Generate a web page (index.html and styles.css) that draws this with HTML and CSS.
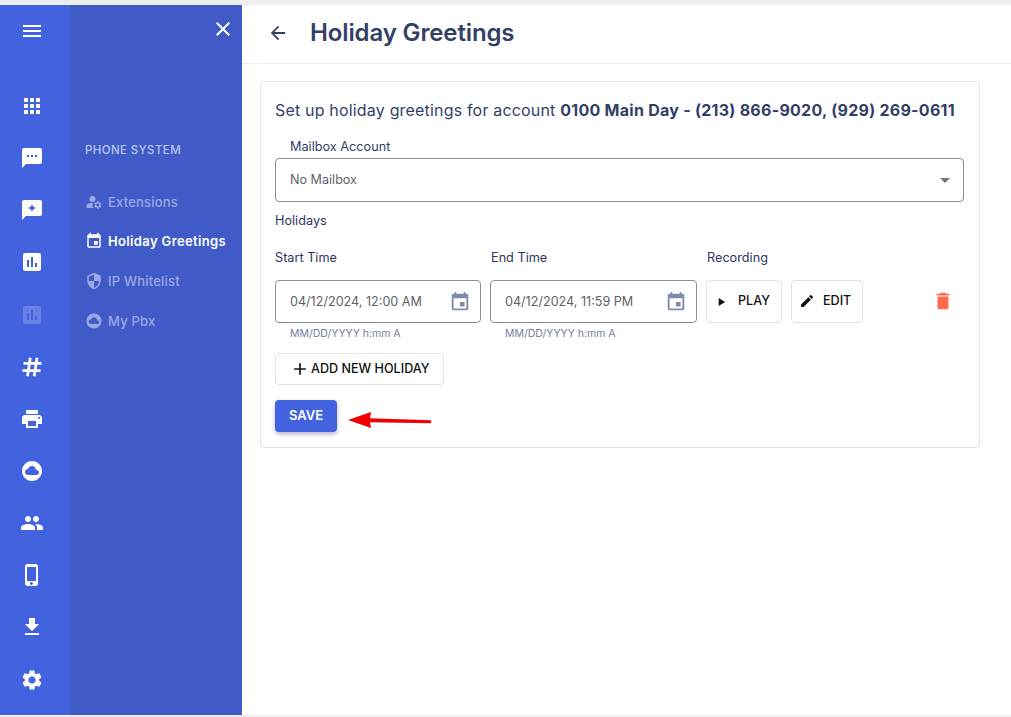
FILE: index.html
```html
<!DOCTYPE html>
<html lang="en">
<head>
<meta charset="utf-8">
<title>Holiday Greetings</title>
<link rel="stylesheet" href="styles.css">
</head>
<body>
<div class="app">
  <nav class="rail">
    <svg class="ic menu-ic" viewBox="0 0 24 24"><path d="M3 18h18v-2H3v2zm0-5h18v-2H3v2zm0-7v2h18V6H3z"/></svg>
    <div class="rail-list">
      <svg class="ic" viewBox="0 0 24 24"><path d="M4 8h4V4H4v4zm6 12h4v-4h-4v4zm-6 0h4v-4H4v4zm0-6h4v-4H4v4zm6 0h4v-4h-4v4zm6-10v4h4V4h-4zm-6 4h4V4h-4v4zm6 6h4v-4h-4v4zm0 6h4v-4h-4v4z"/></svg>
      <svg class="ic" viewBox="0 0 24 24"><path d="M20 2H4c-1.1 0-1.99.9-1.99 2L2 22l4-4h14c1.1 0 2-.9 2-2V4c0-1.1-.9-2-2-2zM9 11H7V9h2v2zm4 0h-2V9h2v2zm4 0h-2V9h2v2z"/></svg>
      <svg class="ic" viewBox="0 0 24 24"><path fill-rule="evenodd" d="M20 2H4c-1.1 0-2 .9-2 2v18l4-4h14c1.1 0 2-.9 2-2V4c0-1.1-.9-2-2-2zM12 6l1.2 2.8L16 10l-2.8 1.2L12 14l-1.2-2.8L8 10l2.8-1.2z"/></svg>
      <svg class="ic" viewBox="0 0 24 24"><path d="M19 3H5c-1.1 0-2 .9-2 2v14c0 1.1.9 2 2 2h14c1.1 0 2-.9 2-2V5c0-1.1-.9-2-2-2zM9 17H7v-7h2v7zm4 0h-2V7h2v10zm4 0h-2v-4h2v4z"/></svg>
      <svg class="ic dim" viewBox="0 0 24 24"><path d="M19 3H5c-1.1 0-2 .9-2 2v14c0 1.1.9 2 2 2h14c1.1 0 2-.9 2-2V5c0-1.1-.9-2-2-2zM9 17H7v-7h2v7zm4 0h-2V7h2v10zm4 0h-2v-4h2v4z"/></svg>
      <svg class="ic" viewBox="0 0 24 24"><path class="hash" d="M10.3 2.8 7.5 21.2M17 2.8l-2.8 18.4M3.5 8.4h18M2.5 15.6h18"/></svg>
      <svg class="ic" viewBox="0 0 24 24"><path d="M19 8H5c-1.66 0-3 1.34-3 3v6h4v4h12v-4h4v-6c0-1.66-1.34-3-3-3zm-3 11H8v-5h8v5zm3-7c-.55 0-1-.45-1-1s.45-1 1-1 1 .45 1 1-.45 1-1 1zm-1-9H6v4h12V3z"/></svg>
      <svg class="ic" viewBox="0 0 24 24"><path d="M12 2C6.48 2 2 6.48 2 12s4.48 10 10 10 10-4.48 10-10S17.52 2 12 2zm4.5 14H8c-1.66 0-3-1.34-3-3s1.34-3 3-3l.14.01C8.58 8.28 10.13 7 12 7c2.21 0 4 1.79 4 4h.5c1.38 0 2.5 1.12 2.5 2.5S17.88 16 16.5 16z"/></svg>
      <svg class="ic" viewBox="0 0 24 24"><path d="M16 11c1.66 0 2.99-1.34 2.99-3S17.66 5 16 5c-1.66 0-3 1.34-3 3s1.34 3 3 3zm-8 0c1.66 0 2.99-1.34 2.99-3S9.66 5 8 5C6.34 5 5 6.34 5 8s1.34 3 3 3zm0 2c-2.33 0-7 1.17-7 3.5V19h14v-2.5c0-2.33-4.67-3.5-7-3.5zm8 0c-.29 0-.62.02-.97.05 1.16.84 1.97 1.97 1.97 3.45V19h6v-2.5c0-2.33-4.67-3.5-7-3.5z"/></svg>
      <svg class="ic" viewBox="0 0 24 24"><path d="M15.5 1h-8C6.12 1 5 2.12 5 3.5v17C5 21.88 6.12 23 7.5 23h8c1.38 0 2.5-1.12 2.5-2.5v-17C18 2.12 16.88 1 15.5 1zm-4 21c-.83 0-1.5-.67-1.5-1.5s.67-1.5 1.5-1.5 1.5.67 1.5 1.5-.67 1.5-1.5 1.5zm4.5-4H7V4h9v14z"/></svg>
      <svg class="ic" viewBox="0 0 24 24"><path d="M19 9h-4V3H9v6H5l7 7 7-7zM5 18v2h14v-2H5z"/></svg>
      <svg class="ic" viewBox="0 0 24 24"><path d="M19.14 12.94c.04-.3.06-.61.06-.94 0-.32-.02-.64-.07-.94l2.03-1.58c.18-.14.23-.41.12-.61l-1.92-3.32c-.12-.22-.37-.29-.59-.22l-2.39.96c-.5-.38-1.03-.7-1.62-.94l-.36-2.54c-.04-.24-.24-.41-.48-.41h-3.84c-.24 0-.43.17-.47.41l-.36 2.54c-.59.24-1.13.57-1.62.94l-2.39-.96c-.22-.08-.47 0-.59.22L2.74 8.87c-.12.21-.08.47.12.61l2.03 1.58c-.05.3-.09.63-.09.94s.02.64.07.94l-2.03 1.58c-.18.14-.23.41-.12.61l1.92 3.32c.12.22.37.29.59.22l2.39-.96c.5.38 1.03.7 1.62.94l.36 2.54c.05.24.24.41.48.41h3.84c.24 0 .44-.17.47-.41l.36-2.54c.59-.24 1.13-.56 1.62-.94l2.39.96c.22.08.47 0 .59-.22l1.92-3.32c.12-.22.07-.47-.12-.61l-2.01-1.58zM12 15.6c-1.98 0-3.6-1.62-3.6-3.6s1.62-3.6 3.6-3.6 3.6 1.62 3.6 3.6-1.62 3.6-3.6 3.6z"/></svg>
    </div>
  </nav>

  <aside class="panel">
    <div class="panel-close">
      <svg class="ic" viewBox="0 0 24 24"><path d="M19 6.41L17.59 5 12 10.59 6.41 5 5 6.41 10.59 12 5 17.59 6.41 19 12 13.41 17.59 19 19 17.59 13.41 12z"/></svg>
    </div>
    <div class="panel-title">PHONE SYSTEM</div>
    <ul class="panel-list">
      <li class="panel-item">
        <svg class="sub-ic" viewBox="0 0 24 24"><circle cx="10" cy="8" r="4"/><path d="M10.67 13.02c-.22-.01-.44-.02-.67-.02-2.42 0-4.68.67-6.61 1.82-.88.52-1.39 1.5-1.39 2.53V20h9.26c-.79-1.13-1.26-2.51-1.26-4 0-1.07.25-2.07.67-2.98zM20.75 16c0-.22-.03-.42-.06-.63l1.14-1.01-1-1.73-1.45.49c-.32-.27-.68-.48-1.08-.63L18 11h-2l-.3 1.49c-.4.15-.76.36-1.08.63l-1.45-.49-1 1.73 1.14 1.01c-.03.21-.06.41-.06.63s.03.42.06.63l-1.14 1.01 1 1.73 1.45-.49c.32.27.68.48 1.08.63L16 21h2l.3-1.49c.4-.15.76-.36 1.08-.63l1.45.49 1-1.73-1.14-1.01c.03-.21.06-.41.06-.63zM17 18c-1.1 0-2-.9-2-2s.9-2 2-2 2 .9 2 2-.9 2-2 2z"/></svg>
        <span>Extensions</span>
      </li>
      <li class="panel-item active">
        <svg class="sub-ic" viewBox="0 0 24 24"><path d="M17 12h-5v5h5v-5zM16 1v2H8V1H6v2H5c-1.11 0-1.99.9-1.99 2L3 19c0 1.1.89 2 2 2h14c1.1 0 2-.9 2-2V5c0-1.1-.9-2-2-2h-1V1h-2zm3 18H5V8h14v11z"/></svg>
        <span>Holiday Greetings</span>
      </li>
      <li class="panel-item">
        <svg class="sub-ic" viewBox="0 0 24 24"><path d="M12 1L3 5v6c0 5.55 3.84 10.74 9 12 5.16-1.26 9-6.45 9-12V5l-9-4zm0 10.99h7c-.53 4.12-3.28 7.79-7 8.94V12H5V6.3l7-3.11v8.8z"/></svg>
        <span>IP Whitelist</span>
      </li>
      <li class="panel-item">
        <svg class="sub-ic" viewBox="0 0 24 24"><path d="M12 2C6.48 2 2 6.48 2 12s4.48 10 10 10 10-4.48 10-10S17.52 2 12 2zm4.5 14H8c-1.66 0-3-1.34-3-3s1.34-3 3-3l.14.01C8.58 8.28 10.13 7 12 7c2.21 0 4 1.79 4 4h.5c1.38 0 2.5 1.12 2.5 2.5S17.88 16 16.5 16z"/></svg>
        <span>My Pbx</span>
      </li>
    </ul>
  </aside>

  <main class="main">
    <header class="topbar">
      <svg class="back-ic" viewBox="0 0 24 24"><path d="M20 11H7.83l5.59-5.59L12 4l-8 8 8 8 1.41-1.41L7.83 13H20v-2z"/></svg>
      <h1 class="page-title">Holiday Greetings</h1>
    </header>

    <section class="card">
      <p class="intro">Set up holiday greetings for account <strong>0100 Main Day - (213) 866-9020, (929) 269-0611</strong></p>
      <div class="mailbox-label">Mailbox Account</div>
      <div class="select">
        <span>No Mailbox</span>
        <svg class="caret" viewBox="0 0 24 24"><path d="M7 10l5 5 5-5z"/></svg>
      </div>
      <div class="holidays">Holidays</div>

      <div class="holiday-grid">
        <div class="col-label">Start Time</div>
        <div class="col-label">End Time</div>
        <div class="col-label">Recording</div>
        <div></div>

        <div class="field">
          <div class="date-input">
            <span>04/12/2024, 12:00 AM</span>
            <svg class="cal" viewBox="0 0 24 24"><path d="M17 12h-5v5h5v-5zM16 1v2H8V1H6v2H5c-1.11 0-1.99.9-1.99 2L3 19c0 1.1.89 2 2 2h14c1.1 0 2-.9 2-2V5c0-1.1-.9-2-2-2h-1V1h-2zm3 18H5V8h14v11z"/></svg>
          </div>
          <div class="hint">MM/DD/YYYY h:mm A</div>
        </div>
        <div class="field nudge">
          <div class="date-input">
            <span>04/12/2024, 11:59 PM</span>
            <svg class="cal" viewBox="0 0 24 24"><path d="M17 12h-5v5h5v-5zM16 1v2H8V1H6v2H5c-1.11 0-1.99.9-1.99 2L3 19c0 1.1.89 2 2 2h14c1.1 0 2-.9 2-2V5c0-1.1-.9-2-2-2h-1V1h-2zm3 18H5V8h14v11z"/></svg>
          </div>
          <div class="hint">MM/DD/YYYY h:mm A</div>
        </div>
        <div class="rec-btns nudge">
          <button class="btn btn-play" type="button">
            <svg class="btn-ic small" viewBox="0 0 24 24"><path d="M8 5v14l11-7z"/></svg>PLAY
          </button>
          <button class="btn btn-edit" type="button">
            <svg class="btn-ic" viewBox="0 0 24 24"><path d="M3 17.25V21h3.75L17.81 9.94l-3.75-3.75L3 17.25zM20.71 7.04c.39-.39.39-1.02 0-1.41l-2.34-2.34c-.39-.39-1.02-.39-1.41 0l-1.83 1.83 3.75 3.75 1.83-1.83z"/></svg>EDIT
          </button>
        </div>
        <div class="trash-cell">
          <svg class="trash" viewBox="0 0 24 24"><path d="M6 19c0 1.1.9 2 2 2h8c1.1 0 2-.9 2-2V7H6v12zM19 4h-3.5l-1-1h-5l-1 1H5v2h14V4z"/></svg>
        </div>
      </div>

      <button class="btn btn-add" type="button">
        <svg class="add-ic" viewBox="0 0 24 24"><path d="M19 13h-6v6h-2v-6H5v-2h6V5h2v6h6v2z"/></svg>ADD NEW HOLIDAY
      </button>
      <button class="btn-save" type="button">SAVE</button>
    </section>

    <svg class="red-arrow" viewBox="0 0 84 20"><path d="M0 9 23 1l-1 6.3 61 2v3L22 11.3 23 17z"/></svg>
  </main>
</div>
</body>
</html>
```

FILE: styles.css
```css
* { box-sizing: border-box; }

html, body {
  margin: 0;
  height: 100%;
  background: #eeeeee;
  overflow: hidden;
}

body {
  padding: 5px 0 2px;
  font-family: Inter, "Liberation Sans", sans-serif;
  color: #333f67;
}

.app {
  display: flex;
  height: 710px;
  background: #fff;
}

.ic {
  display: block;
  width: 24px;
  height: 24px;
  fill: #fff;
  flex: none;
}

.rail {
  width: 70px;
  flex: none;
  background: #4262e0;
  display: flex;
  flex-direction: column;
  align-items: center;
  padding: 14px 6px 0 0;
}

.rail-list {
  display: flex;
  flex-direction: column;
  gap: 28.16px;
  margin-top: 50.9px;
}

.dim { opacity: 0.2; }

.hash {
  fill: none;
  stroke: #fff;
  stroke-width: 2.7;
}

.panel {
  width: 172px;
  flex: none;
  background: #405bc8;
  display: flex;
  flex-direction: column;
}

.panel-close {
  display: flex;
  justify-content: flex-end;
  padding: 12px 7px 0 0;
}

.panel-title {
  margin: 101px 0 0 15px;
  font-size: 11.5px;
  line-height: 16px;
  font-weight: 500;
  letter-spacing: 0.4px;
  color: #b9c5ec;
}

.panel-list {
  list-style: none;
  margin: 33.8px 0 0;
  padding: 0 0 0 15px;
  display: flex;
  flex-direction: column;
  gap: 19.6px;
}

.panel-item {
  display: flex;
  align-items: center;
  gap: 5px;
  height: 20px;
  font-size: 13px;
  font-weight: 500;
  letter-spacing: 0.2px;
  color: #9aa9e3;
  white-space: nowrap;
}

.panel-item.active {
  color: #fff;
  font-weight: 600;
  letter-spacing: 0.36px;
}

.sub-ic {
  width: 18px;
  height: 18px;
  flex: none;
  fill: #9aa9e3;
}

.active .sub-ic { fill: #fff; }

.main {
  position: relative;
  flex: 1;
  min-width: 0;
}

.topbar {
  display: flex;
  align-items: center;
  height: 59px;
  padding: 0 0 2px 24px;
  border-bottom: 1px solid #eceef6;
}

.back-ic {
  width: 24px;
  height: 24px;
  fill: #333f67;
  transform: scale(0.9);
}

.page-title {
  margin: 0 0 0 20px;
  font-size: 24px;
  line-height: 32px;
  font-weight: 600;
  letter-spacing: -0.13px;
  color: #333f67;
}

.card {
  width: 720px;
  height: 367px;
  margin: 17px 0 0 18px;
  padding: 14px 14px 14px;
  border: 1px solid #e2e2e2;
  border-radius: 4px;
  background: #fff;
}

.intro {
  margin: 0;
  font-size: 16px;
  line-height: 28px;
  letter-spacing: 0.18px;
  white-space: nowrap;
}

.intro strong {
  font-weight: 700;
  letter-spacing: 0.26px;
}

.mailbox-label {
  margin: 14px 0 0 15px;
  font-size: 12.7px;
  line-height: 18px;
}

.select {
  display: flex;
  align-items: center;
  justify-content: space-between;
  height: 44px;
  margin: 2px 1px 0 0;
  padding: 0 12px 2px 14px;
  border: 1px solid #8e8e8e;
  border-radius: 4px;
  font-size: 12.6px;
  color: #5f6368;
}

.caret {
  width: 24px;
  height: 24px;
  fill: #757575;
  margin: 2px -6px 0 0;
}

.holidays {
  margin-top: 10px;
  font-size: 12.7px;
  line-height: 18px;
  color: #2e3560;
}

.holiday-grid {
  display: grid;
  grid-template-columns: 206px 206px 206px 1fr;
  column-gap: 10px;
  margin-top: 19px;
}

.col-label {
  font-size: 12.7px;
  line-height: 18px;
  margin-bottom: 13px;
  color: #2e3560;
}

.field { min-width: 0; }

.nudge { margin-left: -1px; }

.date-input {
  display: flex;
  align-items: center;
  justify-content: space-between;
  height: 43px;
  padding: 0 9px 0 14px;
  border: 1px solid #8e8e8e;
  border-radius: 4px;
  font-size: 12.6px;
  color: #5f6368;
  white-space: nowrap;
}

.cal {
  width: 22px;
  height: 22px;
  fill: #8189a8;
}

.hint {
  margin: 4px 0 0 15px;
  font-size: 10.5px;
  line-height: 14px;
  color: #767e9c;
}

.rec-btns {
  display: flex;
  gap: 9px;
  height: 43px;
}

.btn {
  display: inline-flex;
  align-items: center;
  padding: 0;
  background: #fff;
  border: 1px solid #e2e2e2;
  border-radius: 4px;
  font-family: inherit;
  font-size: 12.6px;
  font-weight: 500;
  color: #111;
}

.btn-play { width: 76px; height: 43px; padding: 0 0 2px 7px; gap: 10px; }
.btn-edit { width: 72px; height: 43px; padding: 0 0 2px 7px; gap: 8px; }

.btn-ic {
  width: 16px;
  height: 16px;
  fill: #111;
  flex: none;
}

.btn-ic.small {
  width: 14px;
  height: 14px;
  margin-top: 2px;
}

.trash-cell {
  height: 43px;
  display: flex;
  align-items: center;
  padding: 0 0 2px 9px;
}

.trash {
  width: 22px;
  height: 22px;
  fill: #ff6a4d;
}

.btn-add {
  display: flex;
  width: 169px;
  height: 32px;
  margin-top: 12px;
  padding: 0 0 1px 14px;
  gap: 1px;
  font-size: 12.6px;
}

.add-ic {
  width: 20px;
  height: 20px;
  fill: #111;
}

.btn-save {
  display: block;
  width: 62px;
  height: 32px;
  margin-top: 15px;
  padding: 0 0 2px;
  border: 0;
  border-radius: 4px;
  background: #4262e0;
  box-shadow: 0 2px 4px rgba(30, 40, 90, 0.35);
  font-family: inherit;
  font-size: 13px;
  font-weight: 600;
  color: #fff;
}

.red-arrow {
  position: absolute;
  left: 106px;
  top: 406px;
  width: 84px;
  height: 20px;
  fill: #f00000;
}
```
